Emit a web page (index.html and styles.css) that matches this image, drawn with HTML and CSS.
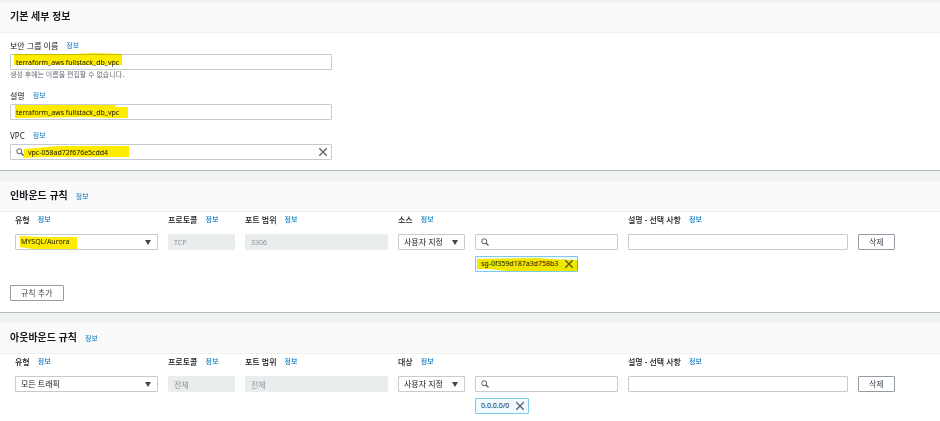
FILE: index.html
```html
<!DOCTYPE html>
<html lang="ko">
<head>
    <meta charset="UTF-8">
    <meta name="viewport" content="width=device-width, initial-scale=1.0">
    <title>보안 그룹 생성</title>
    <link rel="stylesheet" href="styles.css">
</head>
<body>
    <svg class="sprite" aria-hidden="true">
        <symbol id="icon-search" viewBox="0 0 16 16">
            <circle cx="6.5" cy="6.5" r="5" fill="none" stroke="#545b64" stroke-width="2"/>
            <path d="M10 10 L15 15" stroke="#545b64" stroke-width="2.5"/>
        </symbol>
        <symbol id="icon-close" viewBox="0 0 16 16">
            <path d="M2 2 L14 14 M14 2 L2 14" stroke="#545b64" stroke-width="2"/>
        </symbol>
        <symbol id="icon-caret" viewBox="0 0 12 10">
            <path d="M0 0 H12 L6 10 Z" fill="#414750"/>
        </symbol>
    </svg>

    <section class="panel">
        <header class="panel-header">
            <h2>기본 세부 정보</h2>
        </header>
        <div class="details">
            <div class="field">
                <div class="field-label">
                    <label for="group-name">보안 그룹 이름</label>
                    <a href="#" class="info">정보</a>
                </div>
                <div class="control">
                    <input type="text" id="group-name" value="terraform_aws fullstack_db_vpc">
                    <svg class="marker marker-name" viewBox="0 0 108 13" preserveAspectRatio="none"><path d="M0 1 L60 1 L80 0 L108 1 V12 H0 Z"/></svg>
                </div>
                <p class="hint">생성 후에는 이름을 편집할 수 없습니다.</p>
            </div>
            <div class="field">
                <div class="field-label">
                    <label for="group-desc">설명</label>
                    <a href="#" class="info">정보</a>
                </div>
                <div class="control">
                    <input type="text" id="group-desc" value="terraform_aws fullstack_db_vpc">
                    <svg class="marker marker-desc" viewBox="0 0 113 13" preserveAspectRatio="none"><path d="M0 0 L100 0 L101 2 L113 2 V13 L95 13 L70 12 L0 13 Z"/></svg>
                </div>
            </div>
            <div class="field">
                <div class="field-label">
                    <label for="vpc">VPC</label>
                    <a href="#" class="info">정보</a>
                </div>
                <div class="control search">
                    <svg class="icon icon-search"><use href="#icon-search"/></svg>
                    <input type="text" id="vpc" value="vpc-058ad72f676e5cdd4">
                    <button class="clear" aria-label="지우기"><svg class="icon"><use href="#icon-close"/></svg></button>
                    <svg class="marker marker-vpc" viewBox="0 0 106 12" preserveAspectRatio="none"><path d="M1 3 L36 0 H106 V11 L20 11 L0 12 Z"/></svg>
                </div>
            </div>
        </div>
    </section>

    <section class="panel">
        <header class="panel-header">
            <h2>인바운드 규칙</h2>
            <a href="#" class="info">정보</a>
        </header>
        <div class="rules">
            <div class="rule">
                <div class="column">
                    <div class="column-label">
                        <label for="in-type">유형</label>
                        <a href="#" class="info">정보</a>
                    </div>
                    <div class="control">
                        <select id="in-type"><option>MYSQL/Aurora</option></select>
                        <svg class="caret"><use href="#icon-caret"/></svg>
                        <svg class="marker marker-type" viewBox="0 0 57 13" preserveAspectRatio="none"><path d="M0 0 L20 1 L57 1 V13 L12 13 L0 11 Z"/></svg>
                    </div>
                </div>
                <div class="column">
                    <div class="column-label">
                        <label for="in-protocol">프로토콜</label>
                        <a href="#" class="info">정보</a>
                    </div>
                    <div class="control"><input type="text" id="in-protocol" value="TCP" disabled></div>
                </div>
                <div class="column">
                    <div class="column-label">
                        <label for="in-port">포트 범위</label>
                        <a href="#" class="info">정보</a>
                    </div>
                    <div class="control"><input type="text" id="in-port" value="3306" disabled></div>
                </div>
                <div class="column">
                    <div class="column-label">
                        <label for="in-source">소스</label>
                        <a href="#" class="info">정보</a>
                    </div>
                    <div class="control">
                        <select id="in-source" class="korean"><option>사용자 지정</option></select>
                        <svg class="caret"><use href="#icon-caret"/></svg>
                    </div>
                </div>
                <div class="column no-label">
                    <div class="control search">
                        <svg class="icon icon-search"><use href="#icon-search"/></svg>
                        <input type="text" aria-label="소스 검색">
                    </div>
                    <div class="token">
                        <span>sg-0f359d187a3d758b3</span>
                        <button aria-label="제거"><svg class="icon"><use href="#icon-close"/></svg></button>
                        <svg class="marker marker-token" viewBox="0 0 104 13" preserveAspectRatio="none"><path d="M0 1 L60 0 L75 1 L104 2 V13 L30 13 L12 11 L0 11 Z"/></svg>
                    </div>
                </div>
                <div class="column">
                    <div class="column-label">
                        <label for="in-desc">설명 - 선택 사항</label>
                        <a href="#" class="info">정보</a>
                    </div>
                    <div class="control"><input type="text" id="in-desc"></div>
                </div>
                <div class="column no-label">
                    <button class="btn">삭제</button>
                </div>
            </div>
            <button class="btn btn-add">규칙 추가</button>
        </div>
    </section>

    <section class="panel">
        <header class="panel-header">
            <h2>아웃바운드 규칙</h2>
            <a href="#" class="info">정보</a>
        </header>
        <div class="rules">
            <div class="rule">
                <div class="column">
                    <div class="column-label">
                        <label for="out-type">유형</label>
                        <a href="#" class="info">정보</a>
                    </div>
                    <div class="control">
                        <select id="out-type" class="korean"><option>모든 트래픽</option></select>
                        <svg class="caret"><use href="#icon-caret"/></svg>
                    </div>
                </div>
                <div class="column">
                    <div class="column-label">
                        <label for="out-protocol">프로토콜</label>
                        <a href="#" class="info">정보</a>
                    </div>
                    <div class="control"><input type="text" id="out-protocol" class="korean" value="전체" disabled></div>
                </div>
                <div class="column">
                    <div class="column-label">
                        <label for="out-port">포트 범위</label>
                        <a href="#" class="info">정보</a>
                    </div>
                    <div class="control"><input type="text" id="out-port" class="korean" value="전체" disabled></div>
                </div>
                <div class="column">
                    <div class="column-label">
                        <label for="out-target">대상</label>
                        <a href="#" class="info">정보</a>
                    </div>
                    <div class="control">
                        <select id="out-target" class="korean"><option>사용자 지정</option></select>
                        <svg class="caret"><use href="#icon-caret"/></svg>
                    </div>
                </div>
                <div class="column no-label">
                    <div class="control search">
                        <svg class="icon icon-search"><use href="#icon-search"/></svg>
                        <input type="text" aria-label="대상 검색">
                    </div>
                    <div class="token">
                        <span>0.0.0.0/0</span>
                        <button aria-label="제거"><svg class="icon"><use href="#icon-close"/></svg></button>
                    </div>
                </div>
                <div class="column">
                    <div class="column-label">
                        <label for="out-desc">설명 - 선택 사항</label>
                        <a href="#" class="info">정보</a>
                    </div>
                    <div class="control"><input type="text" id="out-desc"></div>
                </div>
                <div class="column no-label">
                    <button class="btn">삭제</button>
                </div>
            </div>
        </div>
    </section>
</body>
</html>
```
FILE: styles.css
```css
* {
    box-sizing: border-box;
}
body {
    margin: 0;
    padding-top: 2px;
    min-height: 100vh;
    display: flex;
    flex-direction: column;
    gap: 10px;
    font-family: "Noto Sans", "Noto Sans CJK KR", sans-serif;
    font-size: 8px;
    line-height: 10px;
    color: #16191f;
    background: #f1f3f3;
}
input, select, button {
    margin: 0;
    font-family: inherit;
    font-size: 7px;
    line-height: 10px;
    color: #16191f;
}
.sprite {
    position: absolute;
    width: 0;
    height: 0;
}
.panel {
    background: #fff;
    border-bottom: 1px solid #b5bdbf;
}
.panel:last-child {
    flex: 1;
    border-bottom: none;
}
.panel-header {
    display: flex;
    align-items: baseline;
    gap: 8px;
    padding: 7px 10px 9px;
    background: #fafafa;
    border-bottom: 1px solid #eff0f0;
}
h2 {
    margin: 0;
    font-size: 10px;
    line-height: 14px;
    font-weight: 700;
}
.info {
    font-size: 7px;
    color: #0073bb;
    text-decoration: none;
}

/* basic details */
.details {
    display: flex;
    flex-direction: column;
    gap: 11px;
    width: 36%;
    padding: 8px 6px 10px 10px;
}
.field-label, .column-label {
    display: flex;
    gap: 8px;
    height: 10px;
    white-space: nowrap;
}
.field-label {
    margin-bottom: 3px;
}
.hint {
    margin: 0;
    font-size: 7px;
    color: #687078;
}

/* controls */
.control {
    position: relative;
    display: flex;
    align-items: center;
}
.control input, .control select {
    flex: 1;
    min-width: 0;
    width: 100%;
    height: 16px;
    padding: 0 5px;
    border: 1px solid #c4cccc;
    border-radius: 1px;
    background: #fff;
    appearance: none;
}
.control input:disabled {
    color: #879596;
    background: #eaeded;
    border-color: #eaeded;
}
.control .korean {
    font-size: 8px;
}
.search input {
    padding: 0 17px;
}
.icon {
    display: block;
    width: 10px;
    height: 10px;
}
.icon-search {
    position: absolute;
    left: 6px;
    width: 8px;
    height: 8px;
}
.caret {
    position: absolute;
    right: 7px;
    width: 6px;
    height: 5px;
    pointer-events: none;
}
.clear {
    position: absolute;
    right: 4px;
    padding: 0;
    border: none;
    background: none;
}
.btn {
    height: 16px;
    padding: 0 10px;
    font-size: 8px;
    color: #444b54;
    white-space: nowrap;
    background: #fff;
    border: 1px solid #959ba2;
    border-radius: 1px;
}

/* rules */
.rules {
    padding: 3px 10px 11px;
}
.rule {
    display: grid;
    grid-template-columns: 143fr 67fr 143fr 67fr 143fr 220fr 37px;
    gap: 10px;
    padding: 0 35px 0 5px;
}
.column {
    min-width: 0;
}
.column-label {
    margin-bottom: 9px;
    font-weight: 500;
}
.no-label {
    padding-top: 19px;
}
.token {
    position: relative;
    display: inline-flex;
    align-items: center;
    gap: 6px;
    height: 16px;
    margin-top: 6px;
    padding: 0 3px 0 5px;
    font-size: 7px;
    vertical-align: top;
    background: #f1faff;
    border: 1px solid #7bcbe6;
    border-radius: 1px;
}
.token button {
    padding: 0;
    border: none;
    background: none;
}
.btn-add {
    display: block;
    margin-top: 13px;
}

/* highlighter strokes */
.marker {
    position: absolute;
    fill: #ffeb00;
    mix-blend-mode: multiply;
    pointer-events: none;
}
.marker-name {
    left: 4px;
    top: -1px;
    width: 108px;
    height: 13px;
}
.marker-desc {
    left: 5px;
    top: 1px;
    width: 113px;
    height: 13px;
}
.marker-vpc {
    left: 13px;
    top: 2px;
    width: 106px;
    height: 12px;
}
.marker-type {
    left: 5px;
    top: 2px;
    width: 57px;
    height: 13px;
}
.marker-token {
    left: 1px;
    top: 1px;
    width: 101px;
    height: 13px;
}
```
